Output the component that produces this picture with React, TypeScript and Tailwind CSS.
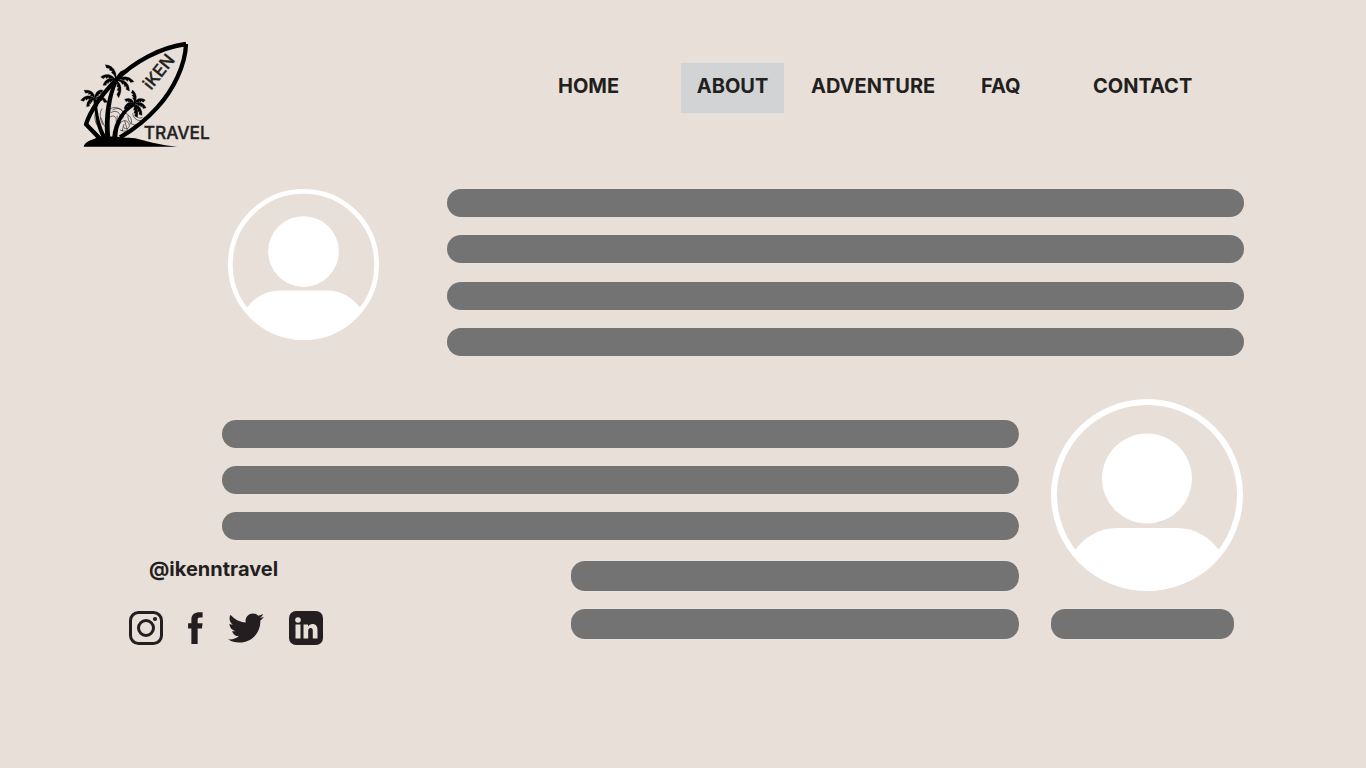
import React from "react";
import { FaTwitter } from "react-icons/fa";

type Point = [number, number];

/* A palm leaf: a curved blade, smooth above and notched below. */
function leafPath(from: Point, via: Point, to: Point) {
  const at = (t: number): Point => [
    (1 - t) * (1 - t) * from[0] + 2 * t * (1 - t) * via[0] + t * t * to[0],
    (1 - t) * (1 - t) * from[1] + 2 * t * (1 - t) * via[1] + t * t * to[1],
  ];
  const edge = (t: number, side: number, width: number): Point => {
    const [x, y] = at(t);
    const [nx, ny] = at(t + 0.02);
    const len = Math.hypot(nx - x, ny - y) || 1;
    return [x - (side * width * (ny - y)) / len, y + (side * width * (nx - x)) / len];
  };
  const notched = to[0] >= from[0] ? 1 : -1;
  const lower = [0.24, 0.46, 0.68].flatMap((t) => [
    edge(t, notched, 3),
    edge(t + 0.2, notched, 8.5 * Math.sin(Math.PI * (0.2 + 0.65 * t))),
  ]);
  const upper = [0.85, 0.7, 0.5, 0.3, 0.15].map((t) => edge(t, -notched, 4 * Math.sin(Math.PI * t)));
  const points = [from, ...lower, to, ...upper];
  return `M${points.map((p) => `${p[0].toFixed(1)} ${p[1].toFixed(1)}`).join("L")}Z`;
}

function Crown({ center, fronds }: { center: Point; fronds: [Point, Point][] }) {
  return (
    <g fill="#000" stroke="#000" strokeWidth="1" strokeLinejoin="round">
      {fronds.map(([via, to], i) => (
        <path key={i} d={leafPath(center, via, to)} />
      ))}
    </g>
  );
}

function Logo() {
  return (
    <svg viewBox="30 30 396 324" className="h-[108px] w-[132px] shrink-0" role="img" aria-label="iKEN Travel">
      <path
        d="M348 42C270 52 190 98 140 148C100 189 62 240 48 283L88 324M348 42C346 105 311 178 262 232C228 270 192 298 150 322"
        fill="none"
        stroke="#000"
        strokeWidth="13"
        strokeLinejoin="round"
      />
      <g fill="none" stroke="#111" strokeWidth="1.8">
        <path d="M120 236C142 226 166 240 160 262C154 276 138 268 142 257M122 248C140 238 154 250 150 264M118 262C132 252 142 262 138 276M158 246C178 252 190 268 182 284M146 284C158 266 176 270 178 286C178 298 164 300 160 290M150 300C164 306 180 304 190 292M84 250C76 264 78 282 88 298M96 236C86 252 92 270 98 284M92 262L104 290M128 240C140 232 154 236 158 244" />
        <path d="M188 250C190 266 204 276 220 270M194 246C196 260 206 268 218 262M174 256C172 272 184 288 200 284M80 240C70 258 76 278 82 286M142 298L152 276M156 304L162 282M164 272L172 300" />
      </g>
      <g fill="#000">
        <path d="M132 156C114 190 100 245 106 326H121C115 260 123 200 142 158Z" />
        <path d="M70 208C74 246 78 292 98 328L110 322C90 288 82 250 80 208Z" />
        <path d="M190 220C160 234 132 268 126 326H142C142 282 160 248 194 228Z" />
        <path d="M41 350C44 338 56 331 74 326C88 315 106 320 118 320C136 318 150 324 176 323C204 323 224 333 248 338C274 344 298 347 322 350Z" />
      </g>
      <Crown
        center={[138, 150]}
        fronds={[
          [[136, 114], [106, 104]],
          [[116, 130], [92, 141]],
          [[112, 144], [99, 166]],
          [[152, 120], [175, 122]],
          [[168, 136], [192, 155]],
          [[172, 152], [178, 183]],
          [[156, 168], [146, 203]],
        ]}
      />
      <Crown
        center={[74, 207]}
        fronds={[
          [[70, 184], [42, 181]],
          [[54, 194], [32, 211]],
          [[56, 208], [50, 230]],
          [[80, 184], [98, 180]],
          [[94, 194], [112, 217]],
          [[82, 218], [70, 240]],
        ]}
      />
      <Crown
        center={[192, 222]}
        fronds={[
          [[200, 200], [188, 180]],
          [[184, 206], [164, 208]],
          [[174, 216], [162, 236]],
          [[204, 204], [226, 210]],
          [[214, 216], [228, 234]],
          [[210, 232], [216, 256]],
          [[200, 240], [202, 262]],
        ]}
      />
      <g fill="#231f20" fontFamily="Inter, 'Liberation Sans', sans-serif" fontWeight="500">
        <text x="221" y="326" fontSize="52" stroke="#231f20" strokeWidth="1">TRAVEL</text>
        <text transform="translate(243 182) rotate(-51)" fontSize="51" stroke="#231f20" strokeWidth="1">iKEN</text>
      </g>
    </svg>
  );
}

function Avatar({ className }: { className: string }) {
  return (
    <svg viewBox="0 0 192 192" className={`shrink-0 ${className}`} role="img" aria-label="Team member">
      <circle cx="96" cy="96" r="93" fill="none" stroke="#fff" strokeWidth="6" />
      <circle cx="96" cy="79.5" r="45" fill="#fff" />
      <path d="M24 151C34 138 48 129 66 129H126C144 129 158 138 168 151C152 177 126 192 96 192C66 192 40 177 24 151Z" fill="#fff" />
    </svg>
  );
}

function Bar({ className }: { className: string }) {
  return <div className={`rounded-[14px] bg-[#737373] ${className}`} />;
}

const links = [
  { label: "HOME", className: "w-[123px]" },
  { label: "ABOUT", className: "mr-[27px] w-[103px] justify-center bg-[#d1d3d4]" },
  { label: "ADVENTURE", className: "w-[170px]" },
  { label: "FAQ", className: "w-[112px]" },
  { label: "CONTACT", className: "w-[107px]" },
];

function Socials() {
  return (
    <div className="flex items-center text-[#231f20]">
      <a href="#instagram" aria-label="Instagram" className="mr-[25px]">
        <svg viewBox="0 0 34 34" className="size-[34px]" fill="none" stroke="currentColor" strokeWidth="3">
          <rect x="1.5" y="1.5" width="31" height="31" rx="8" />
          <circle cx="17" cy="17" r="7.5" />
          <circle cx="26" cy="8" r="2.1" fill="currentColor" stroke="none" />
        </svg>
      </a>
      <a href="#facebook" aria-label="Facebook" className="mr-[25px]">
        <svg viewBox="205 185 45 97" className="h-[32px] w-[15px]" fill="currentColor">
          <path d="M215 282V235H205V219H215V208C215 193 225 186 240 186H249V202H241C236 202 234 204 234 209V219H249L247 235H234V282Z" />
        </svg>
      </a>
      <a href="#twitter" aria-label="Twitter" className="mr-[25px]">
        <FaTwitter className="size-[36px]" />
      </a>
      <a href="#linkedin" aria-label="LinkedIn">
        <svg viewBox="0 0 34 34" className="size-[34px]">
          <rect width="34" height="34" rx="7" fill="currentColor" />
          <g fill="#e8dfd9">
            <circle cx="9" cy="9" r="2.8" />
            <path d="M6.5 13.5H11.5V27.5H6.5ZM14.5 13.5H19V15.5C20 14 21.5 13 23.5 13C27 13 28.5 15.5 28.5 19V27.5H23.8V20C23.8 18.2 23.2 17 21.6 17C20 17 19.2 18.2 19.2 20V27.5H14.5Z" />
          </g>
        </svg>
      </a>
    </div>
  );
}

export default function App() {
  return (
    <div className="min-h-screen bg-[#e8dfd9] pb-16 font-['Inter','Noto_Sans',sans-serif] text-[#231f20]">
      <header className="flex items-start justify-between pt-10 pr-[166px] pl-20">
        <Logo />
        <nav aria-label="Main" className="mt-[23px] flex text-[20px] leading-[26px] font-bold">
          {links.map((link) => (
            <a key={link.label} href={`#${link.label.toLowerCase()}`} className={`flex h-[50px] pt-[10px] ${link.className}`}>
              {link.label}
            </a>
          ))}
        </nav>
      </header>
      <main>
        <section className="mt-[41px] flex gap-[68px] pr-[122px] pl-[228px]">
          <Avatar className="size-[151px]" />
          <div className="flex h-[167px] flex-1 flex-col justify-between">
            <Bar className="h-[28px]" />
            <Bar className="h-[28px]" />
            <Bar className="h-[28px]" />
            <Bar className="h-[28px]" />
          </div>
        </section>
        <section className="mt-[43px] flex gap-8 pr-[123px] pl-[129px]">
          <div className="flex-1 pt-[21px]">
            <div className="flex h-[120px] flex-col justify-between pl-[93px]">
              <Bar className="h-[28px]" />
              <Bar className="h-[28px]" />
              <Bar className="h-[28px]" />
            </div>
            <div className="mt-[17px] flex items-start justify-between">
              <div>
                <p className="mb-[29px] pl-5 text-[20px] leading-[24px] font-bold">@ikenntravel</p>
                <Socials />
              </div>
              <div className="flex w-[448px] flex-col gap-[18px] pt-1">
                <Bar className="h-[30px]" />
                <Bar className="h-[30px]" />
              </div>
            </div>
          </div>
          <div className="w-[192px]">
            <Avatar className="size-[192px]" />
            <Bar className="mt-[18px] mr-[9px] h-[30px]" />
          </div>
        </section>
      </main>
    </div>
  );
}
